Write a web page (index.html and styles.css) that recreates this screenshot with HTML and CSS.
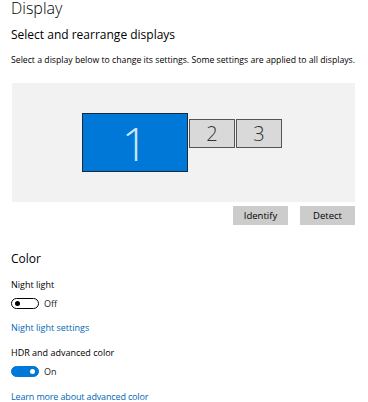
FILE: index.html
```html
<!DOCTYPE html>
<html lang="en">
<head>
    <meta charset="UTF-8">
    <meta name="viewport" content="width=device-width, initial-scale=1.0">
    <title>Display</title>
    <link rel="stylesheet" href="styles.css">
</head>
<body>
    <div class="page">
        <h1>Display</h1>

        <!-- Arrange displays -->
        <h2 class="section-title">Select and rearrange displays</h2>
        <p class="hint">Select a display below to change its settings. Some settings are applied to all displays.</p>

        <div class="arrange-panel">
            <div class="monitor monitor-main">1</div>
            <div class="monitor monitor-side">2</div>
            <div class="monitor monitor-side">3</div>
        </div>

        <div class="button-row">
            <button class="action-btn">Identify</button>
            <button class="action-btn">Detect</button>
        </div>

        <!-- Color -->
        <h2 class="section-title color-title">Color</h2>

        <p class="label night-label">Night light</p>
        <div class="toggle-row">
            <span class="toggle"></span>
            <span class="toggle-text">Off</span>
        </div>
        <a class="link link-night" href="#">Night light settings</a>

        <p class="label hdr-label">HDR and advanced color</p>
        <div class="toggle-row">
            <span class="toggle on"></span>
            <span class="toggle-text">On</span>
        </div>
        <a class="link link-learn" href="#">Learn more about advanced color</a>
    </div>
</body>
</html>
```

FILE: styles.css
```css
body {
    font-family: "Segoe UI", "Open Sans", Arial, sans-serif;
    background-color: #ffffff;
    color: #000000;
    margin: 0;
    padding: 0;
}

.page {
    padding: 0 13px 0 11px;
    display: flex;
    flex-direction: column;
    align-items: flex-start;
}

h1 {
    font-size: 16px;
    font-weight: 300;
    line-height: 17px;
    margin: 0;
}

.section-title {
    font-size: 12px;
    font-weight: 400;
    line-height: 16px;
    margin: 10px 0 0 0;
}

.hint {
    font-size: 8.7px;
    line-height: 12px;
    margin: 11px 0 0 0;
    white-space: nowrap;
}

/* Arrange panel */
.arrange-panel {
    align-self: stretch;
    margin: 17px 0 0 1px;
    height: 119px;
    box-sizing: border-box;
    padding: 30px 0 0 70px;
    background-color: #f2f2f2;
    display: flex;
    align-items: flex-start;
    gap: 1px;
}

.monitor {
    box-sizing: border-box;
    display: flex;
    align-items: center;
    justify-content: center;
    font-weight: 300;
}

.monitor-main {
    width: 106px;
    height: 59px;
    background-color: #0078d7;
    border: 1px solid #1b2a3a;
    color: #cde6fb;
    font-size: 46px;
}

.monitor-side {
    width: 46px;
    height: 29px;
    margin-top: 6px;
    background-color: #d9d9d9;
    border: 1px solid #555555;
    color: #333333;
    font-size: 20px;
}

.button-row {
    align-self: stretch;
    display: flex;
    justify-content: flex-end;
    gap: 12px;
    margin-top: 4px;
}

.action-btn {
    width: 55px;
    height: 19px;
    border: none;
    padding: 0;
    background-color: #cccccc;
    font-family: inherit;
    font-size: 9.5px;
    color: #000000;
}

/* Color section */
.color-title {
    margin-top: 26px;
}

.label {
    font-size: 9px;
    line-height: 12px;
    margin: 0;
}

.night-label {
    margin-top: 12px;
}

.hdr-label {
    margin-top: 13px;
}

.toggle-row {
    display: flex;
    align-items: center;
    gap: 5px;
    margin-top: 7px;
    height: 11px;
}

.toggle {
    box-sizing: border-box;
    width: 28px;
    height: 11px;
    border: 1.5px solid #000000;
    border-radius: 6px;
    position: relative;
}

.toggle::after {
    content: "";
    position: absolute;
    left: 3px;
    top: 2px;
    width: 5px;
    height: 5px;
    border-radius: 50%;
    background-color: #000000;
}

.toggle.on {
    background-color: #0078d7;
    border-color: #0078d7;
}

.toggle.on::after {
    left: auto;
    right: 3px;
    background-color: #ffffff;
}

.toggle-text {
    font-size: 9px;
    color: #222222;
}

.link {
    font-size: 9px;
    line-height: 12px;
    color: #0067b8;
    text-decoration: none;
    margin-top: 13px;
}

.link-learn {
    margin-top: 14px;
    letter-spacing: -0.15px;
}
```
